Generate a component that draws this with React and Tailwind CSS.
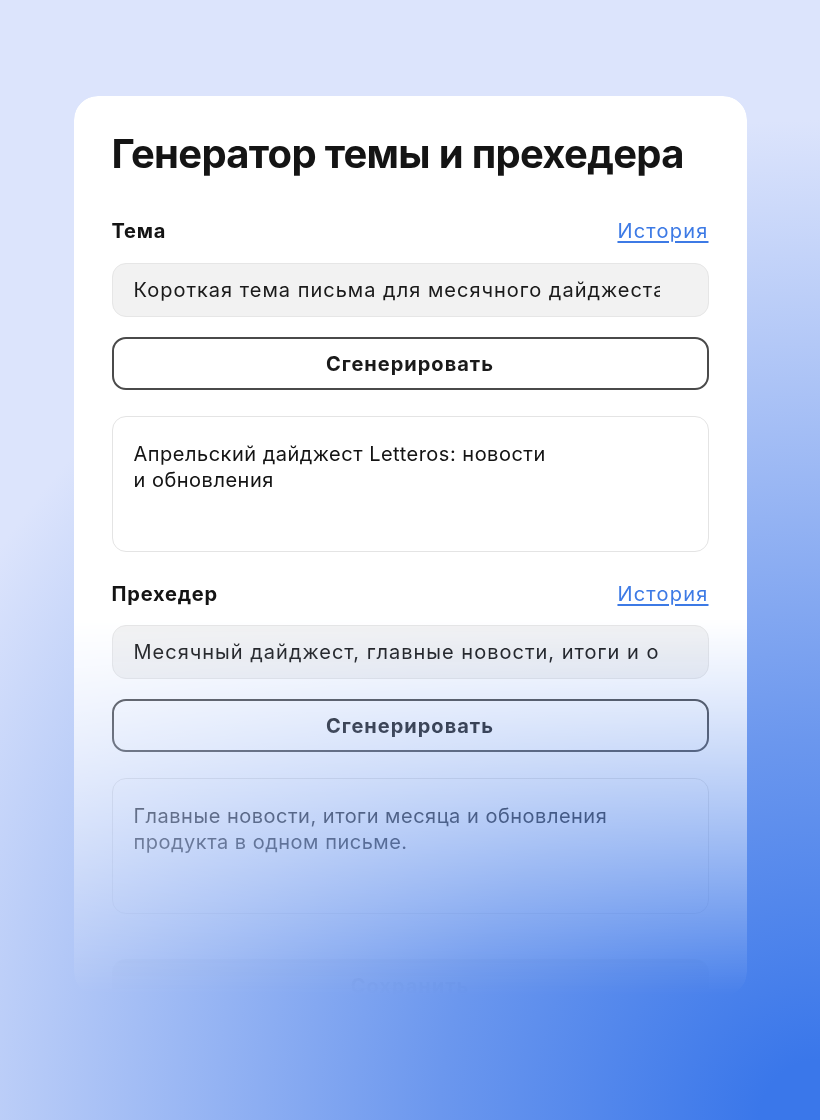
import { useState } from "react";

const FONT = { fontFamily: "Inter, 'Noto Sans', sans-serif" };

function Field({ label, value, onGen, result, first }) {
  return (
    <section className={first ? "mt-[39px]" : "mt-[28px]"}>
      <div className="flex h-[28px] items-center justify-between">
        <span className="text-[20px] font-bold leading-[28px] tracking-[0.8px] text-[#141414]">{label}</span>
        <a href="#" className="text-[20px] leading-[28px] tracking-[1.2px] text-[#3d7ae5] underline underline-offset-[3px]">
          История
        </a>
      </div>
      <input
        readOnly
        value={value}
        className={`${first ? "mt-[18px]" : "mt-[17px]"} block h-[54px] w-full rounded-[14px] border border-[#e6e6e6] bg-[#f2f2f2] pl-[21px] pr-[48px] text-[20px] tracking-[1px] text-[#1a1a1a] outline-none`}
      />
      <button
        onClick={onGen}
        className="mt-[20px] block h-[53px] w-full rounded-[14px] border-2 border-[#4a4a4a] bg-white text-[20px] font-bold tracking-[1px] text-[#1a1a1a]"
      >
        Сгенерировать
      </button>
      <div className="mt-[26px] h-[136px] rounded-[14px] border-[1.5px] border-[#e4e4e4] px-[21px] pt-[24px] text-[20px] leading-[26px] tracking-[0.5px] text-[#141414]">
        {result}
      </div>
    </section>
  );
}

export default function App() {
  const [count, setCount] = useState(0);

  return (
    <div
      style={FONT}
      className="flex h-[1120px] w-full justify-center overflow-hidden bg-[radial-gradient(circle_at_100%_100%,#3a77ea_60px,#6b97ee_380px,#dce4fc_1000px)] pt-[96px]"
    >
      <div className="h-[900px] w-[673px] overflow-hidden rounded-[24px] bg-white px-[38px] pt-[34px] [-webkit-mask-image:linear-gradient(to_bottom,black_58%,transparent_100%)] [mask-image:linear-gradient(to_bottom,black_58%,transparent_100%)]">
        <h1 className="text-[40px] font-bold leading-[48px] tracking-[-0.7px] text-[#141414]">
          Генератор темы и прехедера
        </h1>

        <Field
          first
          label="Тема"
          value="Короткая тема письма для месячного дайджеста"
          onGen={() => setCount(count + 1)}
          result={
            <>
              Апрельский дайджест Letteros: новости
              <br />и обновления
            </>
          }
        />

        <Field
          label="Прехедер"
          value="Месячный дайджест, главные новости, итоги и обновления"
          onGen={() => setCount(count + 1)}
          result={
            <>
              Главные новости, итоги месяца и обновления
              <br />
              продукта в одном письме.
            </>
          }
        />

        <button className="mt-[45px] block h-[53px] w-full rounded-[14px] bg-[#e3e3e3] text-[20px] font-bold tracking-[1px] text-[#8a8a8a]">
          Сохранить
        </button>
      </div>
    </div>
  );
}
